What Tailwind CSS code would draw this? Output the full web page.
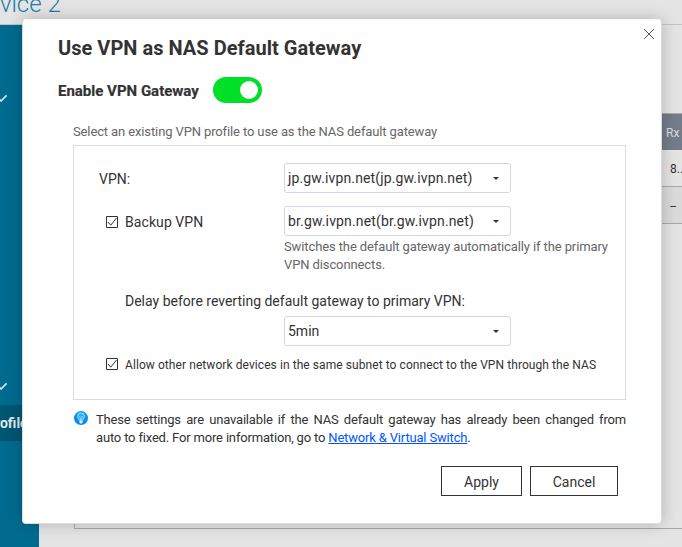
<!DOCTYPE html>
<html lang="en">
<head>
<meta charset="utf-8">
<title>Use VPN as NAS Default Gateway</title>
<script src="https://cdn.jsdelivr.net/npm/@tailwindcss/browser@4"></script>
</head>
<body class="relative h-[547px] w-[682px] overflow-hidden bg-[#e4e4e4] font-['Roboto','Liberation_Sans',sans-serif] text-[#333]">
  <!-- Page behind the dialog -->
  <div class="flex h-full flex-col">
    <header class="flex h-[25px] shrink-0 items-end overflow-hidden border-b border-[#c4c4c4]">
      <span class="ml-[-35px] mb-[6px] whitespace-nowrap text-[24px] leading-[28px] font-light text-[#1f7ba8]">Service 2</span>
    </header>
    <div class="flex flex-1">
      <aside class="w-[39px] shrink-0 overflow-hidden bg-[#006b8f]">
        <svg class="mt-[69px] block h-[9px] w-[9px]" viewBox="0 0 9 9" fill="none" stroke="#d5e6ec" stroke-width="1.6"><path d="M-2 3.5 1 7 6.6 1.4"/></svg>
        <svg class="mt-[279px] block h-[9px] w-[9px]" viewBox="0 0 9 9" fill="none" stroke="#d5e6ec" stroke-width="1.6"><path d="M-2 3.5 1 7 6.6 1.4"/></svg>
        <div class="mt-[14px] flex h-9 items-center bg-[#005573] text-[14px] font-bold text-[#dfe8eb]"><span class="ml-[-14px] whitespace-nowrap">Profiles</span></div>
      </aside>
      <main class="ml-[35px] h-[504px] min-w-0 flex-1 overflow-hidden border-b border-l border-[#a8a8a8]">
        <div class="mt-[88px] border-t border-[#aaa] text-[12px]">
          <div class="flex h-9 items-center bg-[#747b8a] pt-px pl-[591px] text-[#dcdee2]">Rx</div>
          <div class="flex h-[37px] items-center border-b border-[#a8a8a8] pt-px pl-[595px]">8...</div>
          <div class="flex h-[37px] items-center border-b border-[#a8a8a8] bg-[#dadada] pt-px pl-[595px] tracking-[-0.5px]">--</div>
        </div>
      </main>
    </div>
  </div>

  <!-- Dialog -->
  <section class="absolute top-[19px] left-[22px] h-[505px] w-[640px] rounded-[4px] border border-[#dcdcdc] border-t-[#f6f6f6] bg-white pl-[35px] shadow-[0_0_16px_rgba(0,0,0,0.22)]">
    <svg class="absolute top-[8px] right-[6px] h-3 w-3" viewBox="0 0 12 12" fill="none" stroke="#555" stroke-width="1"><path d="M1 1 11 11M11 1 1 11"/></svg>
    <h1 class="mt-[16px] h-6 whitespace-nowrap text-[20px] leading-6 font-bold tracking-[0.03px]">Use VPN as NAS Default Gateway</h1>
    <div class="mt-[17px] flex h-[26px] items-center">
      <span class="w-[155px] pt-[2px] whitespace-nowrap text-[15px] font-bold [-webkit-text-stroke:0.2px_#333]">Enable VPN Gateway</span>
      <span class="flex h-[26px] w-[49px] items-center justify-end rounded-full bg-[#00e029] pr-1"><span class="h-[18px] w-[18px] rounded-full bg-white"></span></span>
    </div>
    <p class="mt-[20px] ml-[15px] h-[18px] whitespace-nowrap text-[13px] leading-[18px] tracking-[-0.12px] text-[#666]">Select an existing VPN profile to use as the NAS default gateway</p>
    <div class="mt-[4px] ml-[15px] h-[255px] w-[553px] border border-[#dadcdf] pt-[17px] pl-[25px]">
      <div class="flex h-[30px] items-center text-[14px]">
        <span class="w-[185px] pt-[2px]">VPN:</span>
        <div class="flex h-[30px] w-[227px] items-center justify-between rounded-[3px] border border-[#d5d7de] pr-[11px] pl-[3px]"><span class="tracking-[0.14px]">jp.gw.ivpn.net(jp.gw.ivpn.net)</span><svg class="h-[3px] w-[6px]" viewBox="0 0 6 3" fill="#333"><path d="M0 0h6L3 3z"/></svg></div>
      </div>
      <div class="mt-[13px] flex h-[30px] items-center text-[14px]">
        <svg class="mt-[2px] ml-[7px] h-3 w-3" viewBox="0 0 12 12" fill="none" stroke="#333"><path d="M.5.5h11v11H.5zM2 6 4.7 9.2 10.5 2"/></svg>
        <span class="ml-[7px] w-[159px] pt-[2px] tracking-[0.08px]">Backup VPN</span>
        <div class="flex h-[30px] w-[227px] items-center justify-between rounded-[3px] border border-[#d5d7de] pr-[11px] pl-[3px]"><span class="tracking-[0.15px]">br.gw.ivpn.net(br.gw.ivpn.net)</span><svg class="h-[3px] w-[6px]" viewBox="0 0 6 3" fill="#333"><path d="M0 0h6L3 3z"/></svg></div>
      </div>
      <p class="mt-[2px] ml-[185px] h-9 whitespace-nowrap text-[13px] leading-[18px] tracking-[-0.11px] text-[#666]">Switches the default gateway automatically if the primary<br>VPN disconnects.</p>
      <p class="mt-[18px] ml-[26px] h-[18px] whitespace-nowrap text-[14px] leading-[18px]">Delay before reverting default gateway to primary VPN:</p>
      <div class="mt-[6px] ml-[185px] flex h-[30px] w-[227px] items-center justify-between rounded-[3px] border border-[#d5d7de] pr-[11px] pl-[3px] text-[14px]"><span>5min</span><svg class="h-[3px] w-[6px]" viewBox="0 0 6 3" fill="#333"><path d="M0 0h6L3 3z"/></svg></div>
      <div class="mt-[9px] flex h-[18px] items-center text-[12px]">
        <svg class="ml-[7px] h-3 w-3" viewBox="0 0 12 12" fill="none" stroke="#333"><path d="M.5.5h11v11H.5zM2 6 4.7 9.2 10.5 2"/></svg>
        <span class="ml-[7px] pt-[2px] whitespace-nowrap tracking-[0.075px]">Allow other network devices in the same subnet to connect to the VPN through the NAS</span>
      </div>
    </div>
    <div class="mt-[11px] ml-[15px] flex w-[553px] items-start text-[13px] leading-[18px]">
      <svg class="mr-[7px] ml-px h-[15px] w-[15px] shrink-0" viewBox="0 0 15 15">
        <defs><linearGradient id="tip" x2="0" y2="1"><stop stop-color="#0a9cf5"/><stop offset="1" stop-color="#0784f0"/></linearGradient></defs>
        <circle cx="7" cy="7.1" r="7" fill="url(#tip)"/>
        <path d="M5.300 9.700C4.700 8 3.700 6.800 3.700 5.100a3.300 3.200 0 0 1 6.600 0c0 1.700-1 2.900-1.600 4.600z" fill="#32a9f7" stroke="#bfe4ff" stroke-width=".9"/>
        <path d="M5.500 10h3v1.500l-.7.9H6.200l-.7-.9z" fill="#d6efff"/>
        <path d="M5.600 5.200 7 9.400 8.400 5.200" fill="none" stroke="#bfe4ff" stroke-width=".7"/>
      </svg>
      <p class="w-[530px] tracking-[-0.17px]"><span class="block whitespace-nowrap [text-align-last:justify]">These settings are unavailable if the NAS default gateway has already been changed from</span> auto to fixed. For more information, go to <a class="text-[#0055ff] underline">Network &amp; Virtual Switch</a>.</p>
    </div>
    <div class="mt-[19px] mr-[43px] flex justify-end gap-2 text-[14px]">
      <button class="h-[30px] w-[81px] border border-[#333] pt-[2px]">Apply</button>
      <button class="h-[30px] w-[88px] border border-[#333] pt-[2px]">Cancel</button>
    </div>
  </section>
</body>
</html>
